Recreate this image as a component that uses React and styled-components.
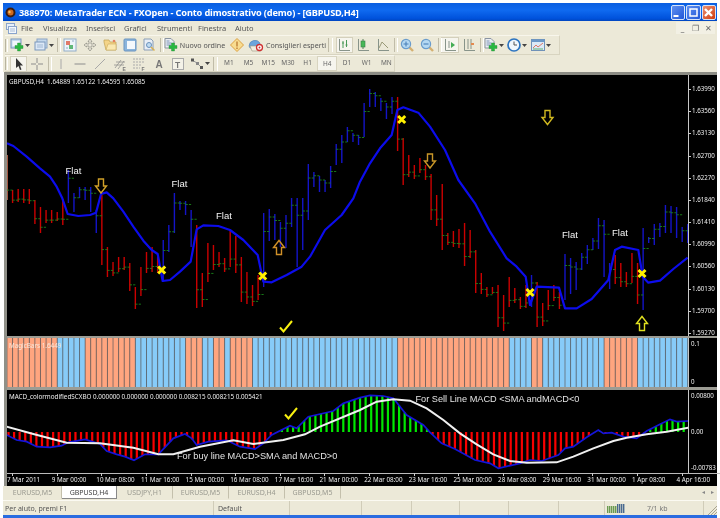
import React from "react";
import styled, { createGlobalStyle } from "styled-components";

const GlobalStyle = createGlobalStyle`
  html, body { margin: 0; padding: 0; background: #fff; }
  * { box-sizing: border-box; }
`;

const UI_FONT = `"Noto Sans", "Liberation Sans", sans-serif`;
const ARIAL = `"Liberation Sans", Arial, sans-serif`;

// bars read off the chart: [top, bottom, colour]
const BARS = [
  [155, 200, "o"], [190, 203, "r"], [189, 202, "r"], [189, 203, "r"], [189, 204, "r"], [200, 224, "r"],
  [207, 233, "r"], [210, 223, "r"], [210, 223, "r"], [212, 221, "r"], [199, 225, "r"], [170, 203, "b"],
  [193, 212, "b"], [187, 198, "b"], [187, 200, "b"], [187, 212, "b"], [210, 233, "b"], [195, 265, "r"],
  [247, 277, "r"], [262, 276, "r"], [257, 272, "r"], [257, 270, "r"], [263, 291, "r"], [287, 309, "r"],
  [267, 296, "r"], [252, 273, "r"], [247, 272, "r"], [257, 273, "r"], [240, 282, "b"], [225, 252, "b"],
  [193, 233, "b"], [201, 210, "b"], [201, 215, "b"], [210, 247, "b"], [225, 308, "r"], [273, 307, "r"],
  [243, 282, "r"], [245, 270, "r"], [252, 267, "r"], [258, 272, "r"], [231, 267, "r"], [236, 273, "r"],
  [257, 302, "r"], [272, 304, "r"], [285, 306, "r"], [275, 300, "r"], [213, 287, "b"], [209, 241, "b"],
  [214, 240, "b"], [222, 247, "b"], [215, 248, "b"], [198, 227, "b"], [198, 267, "b"], [198, 250, "b"],
  [164, 220, "b"], [172, 187, "b"], [176, 192, "b"], [180, 192, "b"], [166, 188, "b"], [144, 165, "b"],
  [135, 163, "b"], [127, 142, "b"], [133, 142, "b"], [135, 145, "b"], [103, 137, "b"], [89, 107, "b"],
  [92, 107, "b"], [98, 111, "b"], [103, 119, "b"], [97, 114, "b"], [97, 151, "r"], [138, 185, "r"],
  [155, 177, "r"], [165, 179, "r"], [158, 173, "r"], [165, 180, "r"], [174, 220, "r"], [195, 226, "r"],
  [184, 250, "r"], [233, 245, "r"], [231, 247, "r"], [229, 248, "r"], [223, 266, "r"], [230, 258, "r"],
  [250, 293, "r"], [273, 294, "r"], [287, 297, "r"], [287, 294, "r"], [285, 327, "r"], [295, 331, "r"],
  [277, 307, "r"], [288, 303, "r"], [297, 309, "r"], [285, 308, "r"], [275, 307, "b"], [282, 327, "r"],
  [303, 326, "r"], [290, 310, "r"], [285, 301, "r"], [292, 309, "r"], [254, 300, "b"], [258, 294, "b"],
  [262, 290, "b"], [253, 270, "b"], [245, 264, "b"], [238, 250, "b"], [218, 249, "b"], [220, 277, "b"],
  [263, 289, "b"], [255, 284, "r"], [263, 287, "r"], [272, 287, "r"], [253, 283, "r"], [263, 304, "r"],
  [228, 310, "b"], [237, 243, "b"], [224, 245, "b"], [223, 237, "b"], [205, 233, "b"], [206, 233, "b"],
  [207, 238, "b"], [227, 242, "b"], [224, 243, "b"],
];

const barX = (i) => 7 + i * 5.58;
const BAR_COLOR = { r: "#cc0000", b: "#1414c8", o: "#f08060" };

// zoomed-crop helpers, the crops were read at 3x
const left = (pts, y0) => pts.map(([x, y]) => [x / 3, y0 + y / 3]);
const right = (pts, y0) => pts.map(([x, y]) => [360 + x / 3, y0 + y / 3]);
const toPoints = (pts) => pts.map((p) => p.join(",")).join(" ");

const TREND = [
  ...left([[21, 220], [40, 228], [80, 260], [120, 295], [150, 320], [170, 350], [187, 385], [203, 432], [235, 438], [270, 435], [288, 428], [303, 372], [320, 367], [340, 385], [370, 425], [400, 470], [430, 512], [455, 540], [473, 552], [488, 633], [510, 630], [540, 605], [572, 575], [590, 478], [610, 466], [655, 468], [690, 480], [730, 510], [773, 555], [790, 635], [815, 637], [860, 615], [905, 590], [930, 560], [975, 480], [1025, 435], [1060, 385]], 70),
  ...right([[0, 335], [30, 280], [60, 235], [95, 195], [112, 120], [130, 112], [175, 128], [210, 170], [255, 240], [295, 330], [345, 400], [390, 485], [440, 565], [470, 590], [497, 620], [510, 705], [530, 650], [597, 653], [615, 715], [650, 715], [695, 687], [745, 630], [765, 540], [785, 530], [835, 540], [848, 620], [865, 638], [900, 632], [940, 597], [983, 563]], 70),
];

const MACD = [
  ...left([[20, 300], [50, 315], [80, 320], [110, 335], [150, 337], [185, 332], [205, 322], [255, 313], [300, 327], [320, 348], [350, 358], [375, 365], [402, 376], [435, 358], [475, 358], [520, 310], [555, 297], [575, 310], [590, 330], [625, 320], [680, 316], [720, 335], [765, 342], [790, 325], [815, 300], [870, 272], [890, 280], [925, 245], [1000, 228], [1030, 205]], 335),
  ...right([[0, 188], [30, 181], [70, 183], [100, 190], [140, 240], [190, 270], [210, 292], [245, 325], [285, 342], [345, 375], [390, 385], [415, 400], [480, 385], [510, 375], [545, 378], [595, 360], [615, 340], [640, 335], [680, 307], [715, 285], [730, 295], [755, 293], [790, 305], [830, 310], [860, 288], [900, 268], [930, 253], [950, 260], [985, 258]], 335),
];

const SIGNAL = [
  ...left([[20, 275], [100, 297], [200, 323], [300, 325], [400, 338], [475, 358], [520, 358], [600, 335], [700, 316], [760, 327], [850, 315], [915, 298], [960, 275]], 335),
  ...right([[0, 225], [50, 200], [100, 193], [150, 197], [200, 220], [250, 255], [300, 295], [350, 328], [400, 358], [450, 378], [500, 383], [590, 382], [640, 365], [700, 340], [760, 318], [800, 308], [860, 298], [920, 290], [985, 278]], 335),
];

const ZERO_Y = 432;

function lineAt(pts, x) {
  for (let i = 1; i < pts.length; i++) {
    if (x <= pts[i][0]) {
      const [x0, y0] = pts[i - 1];
      const [x1, y1] = pts[i];
      return y0 + ((y1 - y0) * (x - x0)) / (x1 - x0 || 1);
    }
  }
  return pts[pts.length - 1][1];
}

const SALMON = [[7, 59.3], [87.3, 137.7], [188.3, 205], [216, 227.3], [232.7, 255], [395, 506.7], [534.3, 545.3], [601.7, 640]];
const isSalmon = (x) => SALMON.some(([a, b]) => x >= a && x < b);

const PRICES = ["1.63990", "1.63560", "1.63130", "1.62700", "1.62270", "1.61840", "1.61410", "1.60990", "1.60560", "1.60130", "1.59700", "1.59270"];
const TIMES = ["7 Mar 2011", "9 Mar 00:00", "10 Mar 08:00", "11 Mar 16:00", "15 Mar 00:00", "16 Mar 08:00", "17 Mar 16:00", "21 Mar 00:00", "22 Mar 08:00", "23 Mar 16:00", "25 Mar 00:00", "28 Mar 08:00", "29 Mar 16:00", "31 Mar 00:00", "1 Apr 08:00", "4 Apr 16:00"];
const MENU = [["File", 22], ["Visualizza", 43], ["Inserisci", 38], ["Grafici", 33], ["Strumenti", 41], ["Finestra", 37], ["Aiuto", 30]];
const TABS = ["EURUSD,M5", "GBPUSD,H4", "USDJPY,H1", "EURUSD,M5", "EURUSD,H4", "GBPUSD,M5"];
const PERIODS = ["M1", "M5", "M15", "M30", "H1", "H4", "D1", "W1", "MN"];

const Icon = ({ children, w = 14 }) => (
  <svg width={w} height="14" viewBox={`0 0 ${w} 14`}>{children}</svg>
);

const Plus = ({ x = 7, y = 6 }) => (
  <path d={`M${x + 2.5} ${y}h3v2.5h2.5v3h-2.5v2.5h-3v-2.5h-2.5v-3h2.5z`} fill="#28b840" stroke="#2a8a38" strokeWidth=".4" />
);

const Drop = () => (
  <svg width="5" height="3" viewBox="0 0 5 3"><path d="M0 0h5L2.500 3z" fill="#444" /></svg>
);

const Magnifier = ({ minus }) => (
  <Icon>
    <path d="M9 9l4 4" stroke="#d4b070" strokeWidth="2.400" />
    <circle cx="6" cy="6" r="4.600" fill="#b4d8f2" stroke="#6a9ccc" strokeWidth="1.200" />
    <path d={minus ? "M3.500 6h5" : "M3.500 6h5M6 3.500v5"} stroke="#4a80b8" strokeWidth="1.100" />
  </Icon>
);

const NewChartIcon = () => (
  <Icon>
    <rect x="1" y="1" width="10" height="9" fill="#c8dcf0" stroke="#7a98bc" />
    <rect x="2.500" y="3" width="7" height="5" fill="#f2f6fa" />
    <Plus x={5} y={5} />
  </Icon>
);

const ProfileIcon = () => (
  <Icon>
    <rect x="3" y="1" width="10" height="9" fill="#c4d8ec" stroke="#8aa4c4" />
    <rect x="1" y="4" width="10" height="8" fill="#dce8f6" stroke="#7a98bc" />
    <path d="M3 7h6M3 9h6" stroke="#a0b8d4" />
  </Icon>
);

const WatchIcon = () => (
  <Icon>
    <rect x="1" y="1" width="12" height="12" fill="#eef4fa" stroke="#92aec8" />
    <rect x="3" y="3" width="4" height="4" fill="#e07a68" />
    <rect x="6" y="7" width="4" height="4" fill="#60b878" />
    <path d="M9 3h2M3 10h2" stroke="#92aec8" />
  </Icon>
);

const NavigatorIcon = () => (
  <Icon>
    <path d="M7 1l2 2.500H8V6h2.500V5L13 7l-2.500 2V8H8v2.500h1L7 13l-2-2.500h1V8H3.500v1L1 7l2.500-2v1H6V3.500H5z" fill="#ece8da" stroke="#8e8e84" strokeWidth=".7" />
  </Icon>
);

const FolderIcon = () => (
  <Icon>
    <path d="M1 4V2h5l1 2h6v8H3z" fill="#f4d488" stroke="#c0a050" strokeWidth=".7" />
    <path d="M5 6h8v6H3z" fill="#fae8b0" stroke="#c0a050" strokeWidth=".5" />
    <circle cx="11" cy="3" r="1.300" fill="#e48060" />
  </Icon>
);

const TerminalIcon = () => (
  <Icon>
    <rect x="1" y="1" width="12" height="12" rx="1" fill="#8ab4dc" stroke="#6a94c0" />
    <rect x="4" y="3" width="8" height="8" fill="#f4f8fc" />
  </Icon>
);

const TesterIcon = () => (
  <Icon>
    <path d="M2 1h7l2 2v9H2z" fill="#e8eef6" stroke="#8a9eb6" />
    <circle cx="7" cy="7" r="2.500" fill="#c0dcf2" stroke="#6a92bc" />
    <path d="M9 9l3.500 3.500" stroke="#d8b050" strokeWidth="1.500" />
  </Icon>
);

const DocPlusIcon = () => (
  <Icon>
    <path d="M1 0.500h6l3 3V10H1z" fill="#eceef2" stroke="#8a94a2" />
    <path d="M2.500 3h3M2.500 5h5M2.500 7h5" stroke="#7a92b8" />
    <Plus x={5} y={5} />
  </Icon>
);

const AlertIcon = () => (
  <Icon>
    <path d="M7 .5L13.500 7 7 13.500.5 7z" fill="#f8dc90" stroke="#dca040" />
    <path d="M7 3.500v5M7 9.500v1.500" stroke="#b87830" strokeWidth="1.300" />
  </Icon>
);

const ExpertIcon = () => (
  <Icon w={16}>
    <path d="M1 8a6 6 0 0 1 11-3l-1 5H2z" fill="#6ca4dc" stroke="#5080b4" strokeWidth=".6" />
    <path d="M2 8h9l2 5H4z" fill="#f2eee0" stroke="#9a9680" strokeWidth=".6" />
    <circle cx="11.500" cy="9.500" r="3" fill="#fff" stroke="#d03030" strokeWidth="1.300" />
    <circle cx="11.500" cy="9.500" r=".9" fill="#d03030" />
  </Icon>
);

const AxisFrame = ({ children }) => (
  <>
    <path d="M2.500 1v11.500H13" fill="none" stroke="#88948a" />
    {children}
  </>
);

const BarsIcon = () => (
  <Icon>
    <AxisFrame>
      <path d="M6 3v7M5 5h2M9.500 2v7M8.500 7h2" stroke="#4a9a58" fill="none" />
    </AxisFrame>
  </Icon>
);

const CandleIcon = () => (
  <Icon>
    <AxisFrame>
      <path d="M7 1v10" stroke="#5a7f5a" />
      <rect x="5" y="3" width="4" height="6" fill="#48b858" stroke="#3a7f48" strokeWidth=".6" />
    </AxisFrame>
  </Icon>
);

const LineIcon = () => (
  <Icon>
    <AxisFrame>
      <path d="M3 10l3-6 2 2 4 4" fill="none" stroke="#9a9a78" />
    </AxisFrame>
  </Icon>
);

const ScrollIcon = () => (
  <Icon>
    <AxisFrame>
      <path d="M6 3v7" stroke="#88948a" />
      <path d="M8 4l4 3-4 3z" fill="#44ac54" />
    </AxisFrame>
  </Icon>
);

const ShiftIcon = () => (
  <Icon>
    <AxisFrame>
      <path d="M6 1v10M9 1v10" stroke="#88948a" />
      <rect x="9" y="5" width="3" height="2" fill="#e48a50" />
    </AxisFrame>
  </Icon>
);

const ClockIcon = () => (
  <Icon>
    <circle cx="7" cy="7" r="6" fill="#f0f6fc" stroke="#2c74c0" strokeWidth="1.700" />
    <path d="M7 3.500V7h3" fill="none" stroke="#555" />
  </Icon>
);

const TemplateIcon = () => (
  <Icon>
    <rect x=".5" y="1.500" width="13" height="11" fill="#dceaf6" stroke="#7092b8" />
    <rect x=".5" y="1.500" width="13" height="2.500" fill="#6a98c8" />
    <path d="M2 10l3-3 2 2 5-4" fill="none" stroke="#dc7868" />
    <path d="M2 11h10" stroke="#60b070" />
  </Icon>
);

const CursorIcon = () => (
  <Icon>
    <path d="M4 1v10l2.500-2 1.500 4 1.500-.6L8 8.500h3z" fill="#333" />
  </Icon>
);

const Cross = () => (
  <Icon>
    <path d="M7 1v5M7 8v5M1 7h5M8 7h5" stroke="#8c8c8c" />
  </Icon>
);

const VLine = () => (
  <Icon>
    <path d="M7 2v10" stroke="#a8a8a8" />
  </Icon>
);

const HLine = () => (
  <Icon>
    <path d="M1.500 7h11" stroke="#8c8c8c" />
  </Icon>
);

const Trend = () => (
  <Icon>
    <path d="M2 12L12 2" stroke="#a8a8a8" />
  </Icon>
);

const ToolLetter = styled.text`
  font-family: ${ARIAL};
  font-size: ${(props) => props.$size || 5}px;
  font-weight: 700;
  fill: #777;
`;

const Channel = () => (
  <Icon>
    <path d="M2 11l6-8M5 12l6-8M1 8h10M3 5h9" stroke="#888" strokeWidth=".7" />
    <ToolLetter x="9.500" y="13.500">E</ToolLetter>
  </Icon>
);

const Fibo = () => (
  <Icon>
    <path d="M1 2h12M1 5h12M1 8h9M1 11h7" stroke="#aaa" strokeDasharray="2 1" />
    <ToolLetter x="9.500" y="13.500">F</ToolLetter>
  </Icon>
);

const LetterA = () => (
  <Icon>
    <ToolLetter x="3.500" y="11" $size={10}>A</ToolLetter>
  </Icon>
);

const LetterT = () => (
  <Icon>
    <rect x="1.500" y="1.500" width="11" height="11" fill="#f4f2e8" stroke="#aaa" />
    <ToolLetter x="4" y="10.500" $size={8.500}>T</ToolLetter>
  </Icon>
);

const ShapesIcon = () => (
  <Icon>
    <path d="M2 3l5 3 5 5" fill="none" stroke="#999" />
    <rect x="1" y="1.500" width="3" height="3" fill="#555" />
    <rect x="6" y="5" width="3" height="3" fill="#888" />
    <rect x="10" y="9" width="3" height="3" fill="#555" />
  </Icon>
);

const CloseGlyph = () => (
  <svg width="11" height="11" viewBox="0 0 11 11"><path d="M2 2l7 7M9 2l-7 7" stroke="#fff" strokeWidth="2.400" /></svg>
);
const RestoreGlyph = () => (
  <svg width="11" height="11" viewBox="0 0 11 11"><rect x="2" y="2" width="7" height="7" fill="none" stroke="#fff" strokeWidth="1.500" /></svg>
);
const MinGlyph = () => (
  <svg width="11" height="11" viewBox="0 0 11 11"><path d="M1.500 9h5" stroke="#fff" strokeWidth="2" /></svg>
);

const AppIcon = () => (
  <svg width="11" height="11" viewBox="0 0 11 11">
    <circle cx="5.500" cy="5.500" r="5" fill="#3a1c10" />
    <circle cx="5.500" cy="5.500" r="3" fill="#d06a20" />
    <circle cx="4.500" cy="5" r="1.200" fill="#f4c060" />
  </svg>
);

const DocMenuIcon = () => (
  <svg width="11" height="11" viewBox="0 0 11 11">
    <rect x=".5" y=".5" width="8" height="6" fill="#e8f0fa" stroke="#8aa4cc" />
    <rect x="2.500" y="3.500" width="8" height="7" fill="#f4f8fc" stroke="#8aa4cc" />
    <path d="M4 6h5M4 8h5" stroke="#a8bcd8" />
  </svg>
);

const ArrowMark = ({ x, y, up, color }) => (
  <path
    transform={`translate(${x} ${y})${up ? " scale(1 -1)" : ""}`}
    d="M-2.500 -7h5v7h3L0 7-5.500 0h3z"
    fill="none"
    stroke={color}
    strokeWidth="1.400"
  />
);

const CrossMark = ({ x, y }) => (
  <path
    transform={`translate(${x} ${y})`}
    d="M-3.500 -3.500L3.500 3.500M3.500 -3.500L-3.500 3.500"
    stroke="#fff000"
    strokeWidth="3"
  />
);

const CheckMark = ({ x, y }) => (
  <path
    transform={`translate(${x} ${y})`}
    d="M-6 0.500L-2.500 4.500 6 -6"
    fill="none"
    stroke="#f8f010"
    strokeWidth="2"
  />
);

function MainChart() {
  return (
    <svg width="681" height="261" viewBox="7 75 681 261">
      {BARS.map(([top, bottom, c], i) => {
        const x = barX(i);
        const close = c === "b" ? top + (bottom - top) * 0.25 : top + (bottom - top) * 0.78;
        const prev = i > 0 ? BARS[i - 1] : BARS[0];
        const open = prev[2] === "b" ? prev[0] + (prev[1] - prev[0]) * 0.25 : prev[0] + (prev[1] - prev[0]) * 0.78;
        return (
          <g key={i}>
            <line x1={x} x2={x} y1={top} y2={bottom} stroke={BAR_COLOR[c]} strokeWidth="1.400" />
            <line x1={x - 2.2} x2={x} y1={open} y2={open} stroke="#1c961c" strokeWidth=".8" />
            <line x1={x} x2={x + 2.2} y1={close} y2={close} stroke="#1c961c" strokeWidth=".8" />
          </g>
        );
      })}
      <polyline points={toPoints(TREND)} fill="none" stroke="#0c0cec" strokeWidth="2.200" strokeLinejoin="round" />
      <ChartCaption x="9" y="83.500">GBPUSD,H4  1.64889 1.65122 1.64595 1.65085</ChartCaption>
      <FlatLabel x="65.500" y="174">Flat</FlatLabel>
      <FlatLabel x="171.500" y="187">Flat</FlatLabel>
      <FlatLabel x="216" y="219">Flat</FlatLabel>
      <FlatLabel x="562" y="238">Flat</FlatLabel>
      <FlatLabel x="612" y="236">Flat</FlatLabel>
      <ArrowMark x={101} y={186} color="#d0a028" />
      <ArrowMark x={430} y={161} color="#c89628" />
      <ArrowMark x={547.500} y={117.500} color="#d0b820" />
      <ArrowMark x={279} y={247.500} up color="#d09028" />
      <ArrowMark x={642} y={323.500} up color="#e0e020" />
      <CrossMark x={161.700} y={270} />
      <CrossMark x={262.700} y={276} />
      <CrossMark x={401.700} y={119.500} />
      <CrossMark x={530} y={292.500} />
      <CrossMark x={642} y={273.500} />
      <CheckMark x={286} y={327} />
    </svg>
  );
}

function MagicChart() {
  return (
    <svg width="681" height="49" viewBox="7 338 681 49">
      {BARS.map((_, i) => {
        const x = barX(i);
        return (
          <g key={i}>
            <rect x={x} y="338" width="5.600" height="49" fill={isSalmon(x + 2.8) ? "#ffa57f" : "#87cbf8"} />
            <line x1={x} x2={x} y1="338" y2="387" stroke="#5c5c60" strokeWidth=".7" />
          </g>
        );
      })}
      <MagicCaption x="9" y="347.500">MagicBars 1.6449</MagicCaption>
    </svg>
  );
}

function MacdChart() {
  return (
    <svg width="681" height="83" viewBox="7 390 681 83">
      {BARS.map((_, i) => {
        const x = barX(i) + 1.500;
        const y = lineAt(MACD, x);
        return (
          <rect
            key={i}
            x={x - 1.100}
            width="2.200"
            y={Math.min(y, ZERO_Y)}
            height={Math.abs(y - ZERO_Y)}
            fill={y < ZERO_Y ? "#00e800" : "#f80000"}
          />
        );
      })}
      <polyline points={toPoints(MACD)} fill="none" stroke="#1414d8" strokeWidth="1.700" />
      <polyline points={toPoints(SIGNAL)} fill="none" stroke="#f0f0f0" strokeWidth="2" />
      <ChartCaption x="9" y="399">MACD_colormodifiedSCXBO 0.000000 0.000000 0.000000 0.008215 0.008215 0.005421</ChartCaption>
      <NoteLabel x="177" y="458.500">For buy line MACD&gt;SMA and MACD&gt;0</NoteLabel>
      <NoteLabel x="415.500" y="402">For Sell Line MACD &lt;SMA andMACD&lt;0</NoteLabel>
      <CheckMark x={291} y={414} />
    </svg>
  );
}

export default function App() {
  return (
    <Window>
      <GlobalStyle />
      <TitleBar>
        <AppIcon />
        <TitleText>388970: MetaTrader ECN - FXOpen - Conto dimostrativo (demo) - [GBPUSD,H4]</TitleText>
        <WindowButtons>
          <WindowButton><MinGlyph /></WindowButton>
          <WindowButton><RestoreGlyph /></WindowButton>
          <WindowButton $close><CloseGlyph /></WindowButton>
        </WindowButtons>
      </TitleBar>
      <MenuBar>
        <MenuIcon><DocMenuIcon /></MenuIcon>
        {MENU.map(([label, width]) => (
          <MenuItem key={label} $w={width}>{label}</MenuItem>
        ))}
        <MdiButtons>
          <MdiButton>_</MdiButton>
          <MdiButton>&#10064;</MdiButton>
          <MdiButton>&#10005;</MdiButton>
        </MdiButtons>
      </MenuBar>
      <Toolbar $h={20}>
        <ToolRow $w={555}>
          <Grip />
          <ToolButton $w={24}><NewChartIcon /><Drop /></ToolButton>
          <ToolButton $w={24}><ProfileIcon /><Drop /></ToolButton>
          <Separator />
          <ToolButton $w={20}><WatchIcon /></ToolButton>
          <ToolButton $w={20}><NavigatorIcon /></ToolButton>
          <ToolButton $w={20}><FolderIcon /></ToolButton>
          <ToolButton $w={20}><TerminalIcon /></ToolButton>
          <ToolButton $w={18.5}><TesterIcon /></ToolButton>
          <Separator />
          <ToolButton $w={64}><DocPlusIcon /><ToolText>Nuovo ordine</ToolText></ToolButton>
          <ToolButton $w={21}><AlertIcon /></ToolButton>
          <ToolButton $w={79}><ExpertIcon /><ToolText>Consiglieri esperti</ToolText></ToolButton>
          <Separator $w={9} $double />
          <ToolButton $w={17} $pressed><BarsIcon /></ToolButton>
          <ToolButton $w={21}><CandleIcon /></ToolButton>
          <ToolButton $w={19}><LineIcon /></ToolButton>
          <Separator />
          <ToolButton $w={20}><Magnifier /></ToolButton>
          <ToolButton $w={20}><Magnifier minus /></ToolButton>
          <Separator />
          <ToolButton $w={18} $pressed><ScrollIcon /></ToolButton>
          <ToolButton $w={20}><ShiftIcon /></ToolButton>
          <Separator />
          <ToolButton $w={23}><DocPlusIcon /><Drop /></ToolButton>
          <ToolButton $w={23}><ClockIcon /><Drop /></ToolButton>
          <ToolButton $w={25}><TemplateIcon /><Drop /></ToolButton>
        </ToolRow>
      </Toolbar>
      <Toolbar $h={17}>
        <ToolRow $w={390}>
          <Grip />
          <ToolButton $w={2} />
          <ToolButton $w={17} $pressed><CursorIcon /></ToolButton>
          <ToolButton $w={20}><Cross /></ToolButton>
          <Separator />
          <ToolButton $w={19}><VLine /></ToolButton>
          <ToolButton $w={20}><HLine /></ToolButton>
          <ToolButton $w={20}><Trend /></ToolButton>
          <ToolButton $w={19}><Channel /></ToolButton>
          <ToolButton $w={20}><Fibo /></ToolButton>
          <ToolButton $w={19}><LetterA /></ToolButton>
          <ToolButton $w={20}><LetterT /></ToolButton>
          <ToolButton $w={24}><ShapesIcon /><Drop /></ToolButton>
          <Separator $w={7} $double />
          {PERIODS.map((p) => (
            <PeriodButton key={p} $pressed={p === "H4"}>{p}</PeriodButton>
          ))}
        </ToolRow>
      </Toolbar>
      <ChartFrame>
        <Pane $h={261}>
          <MainChart />
          <PriceAxis>
            {PRICES.map((p) => (
              <PriceLabel key={p}>{p}</PriceLabel>
            ))}
          </PriceAxis>
        </Pane>
        <PaneGap $h={2} />
        <Pane $h={49}>
          <MagicChart />
          <ScaleAxis $pad={1}>
            <ScaleLabel>0.1</ScaleLabel>
            <ScaleLabel>0</ScaleLabel>
          </ScaleAxis>
        </Pane>
        <PaneGap $h={3} />
        <Pane $h={83}>
          <MacdChart />
          <ScaleAxis $pad={1}>
            <ScaleLabel>0.00800</ScaleLabel>
            <ScaleLabel>0.00</ScaleLabel>
            <ScaleLabel>-0.00783</ScaleLabel>
          </ScaleAxis>
        </Pane>
        <TimeAxis>
          {TIMES.map((t) => (
            <TimeCell key={t}>{t}</TimeCell>
          ))}
        </TimeAxis>
      </ChartFrame>
      <TabBar>
        {TABS.map((t, i) => (
          <Tab key={t + i} $active={i === 1} $first={i === 0}>{t}</Tab>
        ))}
        <TabScroll>
          <span>&#9666;</span>
          <span>&#9656;</span>
        </TabScroll>
      </TabBar>
      <StatusBar>
        <StatusCell $w={211}>Per aiuto, premi F1</StatusCell>
        <StatusCell $w={76} $pad={4}>Default</StatusCell>
        <StatusCell $w={72} />
        <StatusCell $w={50} />
        <StatusCell $w={48} />
        <StatusCell $w={49} />
        <StatusCell $w={50} />
        <StatusCell $w={46} />
        <StatusCell $w={99}>
          <svg width="18" height="9" viewBox="0 0 18 9">
            {Array.from({ length: 9 }, (_, i) => (
              <rect key={i} x={i * 2} y={i < 5 ? 2 : 0} width="1.400" height={i < 5 ? 7 : 9} fill={i < 5 ? "#6a9a50" : "#4a6a90"} />
            ))}
          </svg>
          <TrafficText>7/1 kb</TrafficText>
        </StatusCell>
        <ResizeGrip>
          <svg width="10" height="10" viewBox="0 0 10 10">
            <path d="M1 10L10 1M4 10L10 4M7 10L10 7" stroke="#a8a490" />
          </svg>
        </ResizeGrip>
      </StatusBar>
      <BottomEdge />
    </Window>
  );
}

const Window = styled.div`
  display: flex;
  flex-direction: column;
  width: 720px;
  height: 518px;
  padding: 3px 3px 0;
  overflow: hidden;
  background: #fff;
  font-family: ${UI_FONT};
  filter: blur(0.45px);
`;

const TitleBar = styled.div`
  display: flex;
  align-items: center;
  flex: none;
  height: 18px;
  padding-left: 2px;
  background: linear-gradient(#0a5ee0 0%, #0f6af0 40%, #0052dc 85%, #0046c0 100%);
`;

const TitleText = styled.div`
  margin-left: 3px;
  font-family: ${UI_FONT};
  font-size: 9.200px;
  font-weight: 700;
  letter-spacing: -0.15px;
  color: #fff;
  white-space: nowrap;
`;

const WindowButtons = styled.div`
  display: flex;
  gap: 1px;
  margin-left: auto;
  margin-right: 1px;
`;

const WindowButton = styled.div`
  display: flex;
  align-items: center;
  justify-content: center;
  width: 14.500px;
  height: 15px;
  border: 1px solid #d8e4f8;
  border-radius: 2px;
  background: ${(props) => (props.$close ? "linear-gradient(135deg, #ec9070, #d03c10)" : "linear-gradient(135deg, #6090f0, #2058d8)")};
`;

const MenuBar = styled.div`
  display: flex;
  align-items: center;
  flex: none;
  height: 14px;
  background: #ece9d8;
  font-size: 7.500px;
  color: #555;
`;

const MenuIcon = styled.div`
  display: flex;
  width: 18px;
  padding-left: 3px;
`;

const MenuItem = styled.div`
  width: ${(props) => props.$w}px;
  white-space: nowrap;
`;

const MdiButtons = styled.div`
  display: flex;
  margin-left: auto;
  margin-right: 2px;
`;

const MdiButton = styled.div`
  width: 13px;
  font-size: 8px;
  line-height: 12px;
  text-align: center;
  color: #666;
  background: #f2f0e4;
`;

const Toolbar = styled.div`
  display: flex;
  flex: none;
  height: ${(props) => props.$h}px;
  padding-left: 2px;
  background: #ece9d8;
`;

const ToolRow = styled.div`
  display: flex;
  align-items: center;
  width: ${(props) => props.$w}px;
  border-top: 1px solid #f8f6ec;
  border-right: 1px solid #d8d4c0;
  border-bottom: 1px solid #d8d4c0;
`;

const Grip = styled.div`
  flex: none;
  width: 3px;
  height: 13px;
  border-left: 1px solid #b8b4a0;
  border-right: 1px solid #fff;
`;

const ToolButton = styled.div`
  display: flex;
  align-items: center;
  justify-content: center;
  gap: 1px;
  flex: none;
  width: ${(props) => props.$w}px;
  height: 16px;
  ${(props) => props.$pressed && "background: #f6f5ee; border: 1px solid #d4d0bc;"}
`;

const ToolText = styled.span`
  margin-left: 1px;
  font-size: 7.100px;
  color: #555;
  white-space: nowrap;
`;

const Separator = styled.div`
  flex: none;
  position: relative;
  width: ${(props) => props.$w || 4}px;
  height: 14px;
  &::before {
    content: "";
    position: absolute;
    left: 1px;
    top: 0;
    bottom: 0;
    width: ${(props) => (props.$double ? 3 : 2)}px;
    border-left: 1px solid #c0bca8;
    border-right: 1px solid #fff;
  }
`;

const PeriodButton = styled.div`
  flex: none;
  width: 19.700px;
  height: 15px;
  font-size: 6.500px;
  line-height: 14px;
  text-align: center;
  color: #666;
  ${(props) => props.$pressed && "background: #f6f5ee; border: 1px solid #d8d4c0;"}
`;

const ChartFrame = styled.div`
  display: flex;
  flex-direction: column;
  flex: none;
  margin-left: 1px;
  width: 713px;
  height: 414px;
  border-top: 3px solid #8c8c84;
  border-left: 3px solid #909088;
  background: #a0a098;
`;

const Pane = styled.div`
  display: flex;
  flex: none;
  height: ${(props) => props.$h}px;
  background: #000;
  svg {
    display: block;
    flex: none;
  }
`;

const PaneGap = styled.div`
  flex: none;
  height: ${(props) => props.$h}px;
  background: #9c9c94;
`;

const PriceAxis = styled.div`
  display: flex;
  flex-direction: column;
  gap: 16.180px;
  flex: 1;
  padding-top: 11px;
  border-left: 1px solid #c8c8c8;
  overflow: hidden;
`;

const PriceLabel = styled.div`
  position: relative;
  flex: none;
  height: 6px;
  padding-left: 3px;
  font-size: 6.200px;
  line-height: 6px;
  color: #eee;
  &::before {
    content: "";
    position: absolute;
    left: 0;
    top: 3px;
    width: 2px;
    height: 1px;
    background: #ccc;
  }
`;

const ScaleAxis = styled.div`
  display: flex;
  flex-direction: column;
  justify-content: space-between;
  flex: 1;
  padding: ${(props) => props.$pad}px 0 ${(props) => props.$pad}px 2px;
  border-left: 1px solid #c8c8c8;
  overflow: hidden;
`;

const ScaleLabel = styled.div`
  font-size: 6.200px;
  line-height: 9px;
  white-space: nowrap;
  color: #eee;
`;

const TimeAxis = styled.div`
  display: flex;
  flex: none;
  height: 13px;
  background: #000;
`;

const TimeCell = styled.div`
  position: relative;
  flex: none;
  width: 44.650px;
  padding-top: 2px;
  font-size: 6.300px;
  line-height: 10px;
  color: #eee;
  white-space: nowrap;
  &::before {
    content: "";
    position: absolute;
    left: 0;
    top: 0;
    width: 100%;
    height: 1px;
    background: #bbb;
  }
  &::after {
    content: "";
    position: absolute;
    left: 5px;
    top: 0;
    width: 1px;
    height: 3px;
    background: #ccc;
  }
`;

const TabBar = styled.div`
  display: flex;
  flex: none;
  height: 14px;
  padding-left: 1px;
  background: #ece9d8;
  font-size: 7px;
`;

const Tab = styled.div`
  flex: none;
  width: ${(props) => (props.$first ? 58 : props.$active ? 55 : 56)}px;
  height: 13px;
  line-height: 13px;
  text-align: center;
  color: ${(props) => (props.$active ? "#444" : "#9a9a90")};
  background: ${(props) => (props.$active ? "#fff" : "transparent")};
  border-right: 1px solid ${(props) => (props.$active ? "#888" : "#c4c0ac")};
  border-bottom: 1px solid ${(props) => (props.$active ? "#888" : "transparent")};
`;

const TabScroll = styled.div`
  display: flex;
  gap: 6px;
  margin-left: auto;
  margin-right: 3px;
  font-size: 6px;
  line-height: 13px;
  color: #888;
`;

const StatusBar = styled.div`
  display: flex;
  align-items: stretch;
  flex: none;
  height: 15px;
  background: #ece9d8;
  border-top: 1px solid #fbfaf2;
  font-size: 7px;
  color: #555;
`;

const StatusCell = styled.div`
  display: flex;
  align-items: center;
  flex: none;
  width: ${(props) => props.$w}px;
  padding-left: ${(props) => props.$pad || 2}px;
  border-right: 1px solid #d0ccb8;
  white-space: nowrap;
  &:last-of-type {
    border-right: none;
  }
`;

const TrafficText = styled.span`
  margin-left: 22px;
  color: #777;
`;

const ResizeGrip = styled.div`
  display: flex;
  align-items: flex-end;
  flex: 1;
  justify-content: flex-end;
`;

const BottomEdge = styled.div`
  flex: 1;
  background: #2a6ce0;
`;

const ChartCaption = styled.text`
  font-family: ${UI_FONT};
  font-size: 6.300px;
  fill: #eee;
  white-space: pre;
`;

const MagicCaption = styled.text`
  font-family: ${UI_FONT};
  font-size: 6.300px;
  fill: #f8e8dc;
`;

const FlatLabel = styled.text`
  font-family: ${ARIAL};
  font-size: 9.500px;
  fill: #f4f4f4;
`;

const NoteLabel = styled.text`
  font-family: ${ARIAL};
  font-size: 9.200px;
  fill: #e4e4e4;
`;
